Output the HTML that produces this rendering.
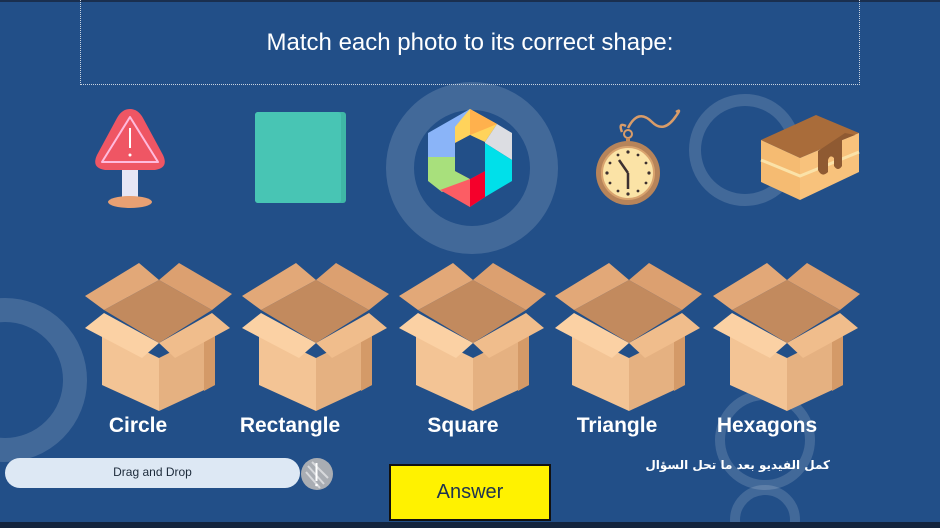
<!DOCTYPE html>
<html><head><meta charset="utf-8">
<style>
html,body{margin:0;padding:0}
body{width:940px;height:528px;overflow:hidden;background:#224f88;position:relative;font-family:"Liberation Sans",sans-serif}
.abs{position:absolute}
.title{left:80px;top:0;width:778px;height:84px;border:1px dotted #c9d3e0;border-top:none;color:#fff;font-size:24px;text-align:center;line-height:86px}
.lbl{color:#fff;font-weight:bold;font-size:21px;top:414px;text-align:center;width:160px}
.pill{left:5px;top:458px;width:295px;height:30px;border-radius:15px;background:#dde8f4;color:#1c2a3a;font-size:12px;text-align:center;line-height:28px}
.ans{left:389px;top:464px;width:158px;height:53px;background:#fff200;border:2px solid #111;color:#1d3350;font-size:20px;text-align:center;line-height:52px}
.ar{right:110px;top:458px;white-space:nowrap;color:#fff;font-weight:bold;font-size:12px;font-family:"DejaVu Sans",sans-serif;direction:rtl}
</style></head><body>
<svg class="abs" style="left:0;top:0" width="940" height="528">
 <g fill="none" stroke="rgba(255,255,255,0.15)">
  <circle cx="472" cy="168" r="72" stroke-width="28"/>
  <circle cx="745" cy="150" r="50" stroke-width="12"/>
  <circle cx="5" cy="380" r="70" stroke-width="24"/>
  <circle cx="765" cy="440" r="45" stroke-width="10"/>
  <circle cx="765" cy="520" r="30" stroke-width="10"/>
 </g>
 <rect x="0" y="0" width="940" height="2" fill="#1a2f4f"/>
 <rect x="0" y="522" width="940" height="6" fill="#13243d"/>
 <rect x="122" y="170" width="16" height="28" fill="#e6e6f5"/>
 <ellipse cx="130" cy="202" rx="22" ry="6" fill="#e8a073"/>
 <path d="M130 109 Q138 109 143 118 L163 155 Q169 168 155 170 L105 170 Q91 168 97 155 L117 118 Q122 109 130 109Z" fill="#ef5664"/>
 <path d="M130 117 L158 162 L102 162Z" fill="none" stroke="#fbd" stroke-width="2" stroke-linejoin="round"/>
 <rect x="129" y="128" width="2" height="20" fill="#fff"/><circle cx="130" cy="155" r="1.5" fill="#fff"/>
 <rect x="255" y="112" width="91" height="91" rx="3" fill="#3fb7a6"/>
 <rect x="255" y="112" width="86" height="91" rx="3" fill="#48c5b4"/>
 <g transform="translate(470,157)">
  <polygon points="0,-48 -42,-24 -42,0 -15,0 -15,-14 0,-22" fill="#8ab4f8"/>
  <polygon points="0,-48 0,-22 -15,-14 -15,0 -6,-4 -15,-30" fill="#ffd35b"/>
  <polygon points="0,-48 27,-33 15,-15 0,-22 -15,-14 -15,-30" fill="#ffd35b"/>
  <polygon points="0,-48 27,-33 15,-28 0,-22" fill="#ffb14d"/>
  <polygon points="27,-33 42,-24 42,3 15,-14 15,-15" fill="#dcdde2"/>
  <polygon points="15,-14 42,3 42,24 15,40" fill="#00e0ea"/>
  <polygon points="15,-14 15,14 0,22 0,50 15,40 15,14" fill="#00e0ea"/>
  <polygon points="0,22 15,14 15,40 0,50" fill="#f5002b"/>
  <polygon points="-42,0 -15,0 0,22 0,50 -30,32" fill="#fc5d64"/>
  <polygon points="-42,0 -15,0 -15,14 0,22 -28,35 -42,24" fill="#a8e07c"/>
  <polygon points="0,22 0,50 -30,33" fill="#fc5d64"/>
  <polygon points="-15,-14 0,-22 15,-14 15,14 0,22 -15,14" fill="#224f88"/>
 </g>
 <path d="M622 132 Q618 122 626 126 M628 128 Q638 108 652 122 Q664 134 676 116 Q682 108 676 112" fill="none" stroke="#d99c69" stroke-width="2.5"/>
 <circle cx="628" cy="134" r="4" fill="none" stroke="#d99c69" stroke-width="2"/>
 <rect x="626" y="138" width="4" height="6" fill="#c58a5a"/>
 <circle cx="628" cy="173" r="32" fill="#b7845a"/>
 <circle cx="628" cy="173" r="26" fill="#fbe3a6" stroke="#d9a36e" stroke-width="2"/>
 <g fill="#3c3030"><circle cx="628" cy="152" r="1.6"/><circle cx="628" cy="194" r="1.6"/><circle cx="607" cy="173" r="1.6"/><circle cx="649" cy="173" r="1.6"/><circle cx="638" cy="155" r="1.4"/><circle cx="646" cy="163" r="1.4"/><circle cx="646" cy="183" r="1.4"/><circle cx="638" cy="191" r="1.4"/><circle cx="618" cy="191" r="1.4"/><circle cx="610" cy="183" r="1.4"/><circle cx="610" cy="163" r="1.4"/><circle cx="618" cy="155" r="1.4"/></g>
 <path d="M628 173 L619 160 M628 173 L628 189" stroke="#3c3030" stroke-width="2.5"/>
 <polygon points="761,140 816,115 859,133 800,158" fill="#a96c3a"/>
 <polygon points="761,140 800,158 800,200 761,182" fill="#f5bb72"/>
 <polygon points="800,158 859,133 859,172 800,200" fill="#f8c27c"/>
 <path d="M761,160 L800,176 L859,152" stroke="#fbe2a8" stroke-width="3" fill="none"/>
 <path d="M818 151 L818 170 Q822 178 828 172 L828 160 Q830 154 834 158 L834 166 Q838 172 842 166 L842 140 L855 135 L845 133Z" fill="#8f5a32"/>
</svg>
<div class="abs title">Match each photo to its correct shape:</div>

<svg width="0" height="0" style="position:absolute"><defs>
 <g id="box">
  <polygon points="22,52 77,22 130,52 77,85" fill="#c28a5e"/>
  <polygon points="3,38 57,5 77,22 22,52" fill="#e2a878"/>
  <polygon points="77,22 97,5 150,36 130,52" fill="#dca070"/>
  <polygon points="20,72 77,100 77,153 20,127" fill="#f3c495"/>
  <polygon points="77,100 133,72 133,127 77,153" fill="#e5b181"/>
  <polygon points="122,78 133,72 133,127 122,133" fill="#d49a68"/>
  <polygon points="3,70 22,55 77,85 60,100" fill="#fbd1a4"/>
  <polygon points="77,85 130,55 148,70 93,100" fill="#f0bd8c"/>
 </g>
</defs></svg>
<svg class="abs" style="left:82px;top:258px" width="150" height="155" viewBox="0 0 150 155"><use href="#box"/></svg>
<svg class="abs" style="left:239px;top:258px" width="150" height="155" viewBox="0 0 150 155"><use href="#box"/></svg>
<svg class="abs" style="left:396px;top:258px" width="150" height="155" viewBox="0 0 150 155"><use href="#box"/></svg>
<svg class="abs" style="left:552px;top:258px" width="150" height="155" viewBox="0 0 150 155"><use href="#box"/></svg>
<svg class="abs" style="left:710px;top:258px" width="150" height="155" viewBox="0 0 150 155"><use href="#box"/></svg>

<div class="abs lbl" style="left:58px">Circle</div>
<div class="abs lbl" style="left:210px">Rectangle</div>
<div class="abs lbl" style="left:383px">Square</div>
<div class="abs lbl" style="left:537px">Triangle</div>
<div class="abs lbl" style="left:687px">Hexagons</div>

<div class="abs pill">Drag and Drop</div>
<svg class="abs" style="left:300px;top:458px" width="36" height="34">
 <circle cx="17" cy="16" r="16" fill="#a9adb3"/>
 <path d="M8 8 L24 26 M6 14 L20 30 M12 4 L28 20" stroke="#d7d9dc" stroke-width="2"/>
 <rect x="15.5" y="5" width="2" height="18" fill="#fff"/><circle cx="16.5" cy="27" r="1.3" fill="#fff"/>
</svg>
<div class="abs ans">Answer</div>
<div class="abs ar">كمل الفيديو بعد ما تحل السؤال</div>
</body></html>
